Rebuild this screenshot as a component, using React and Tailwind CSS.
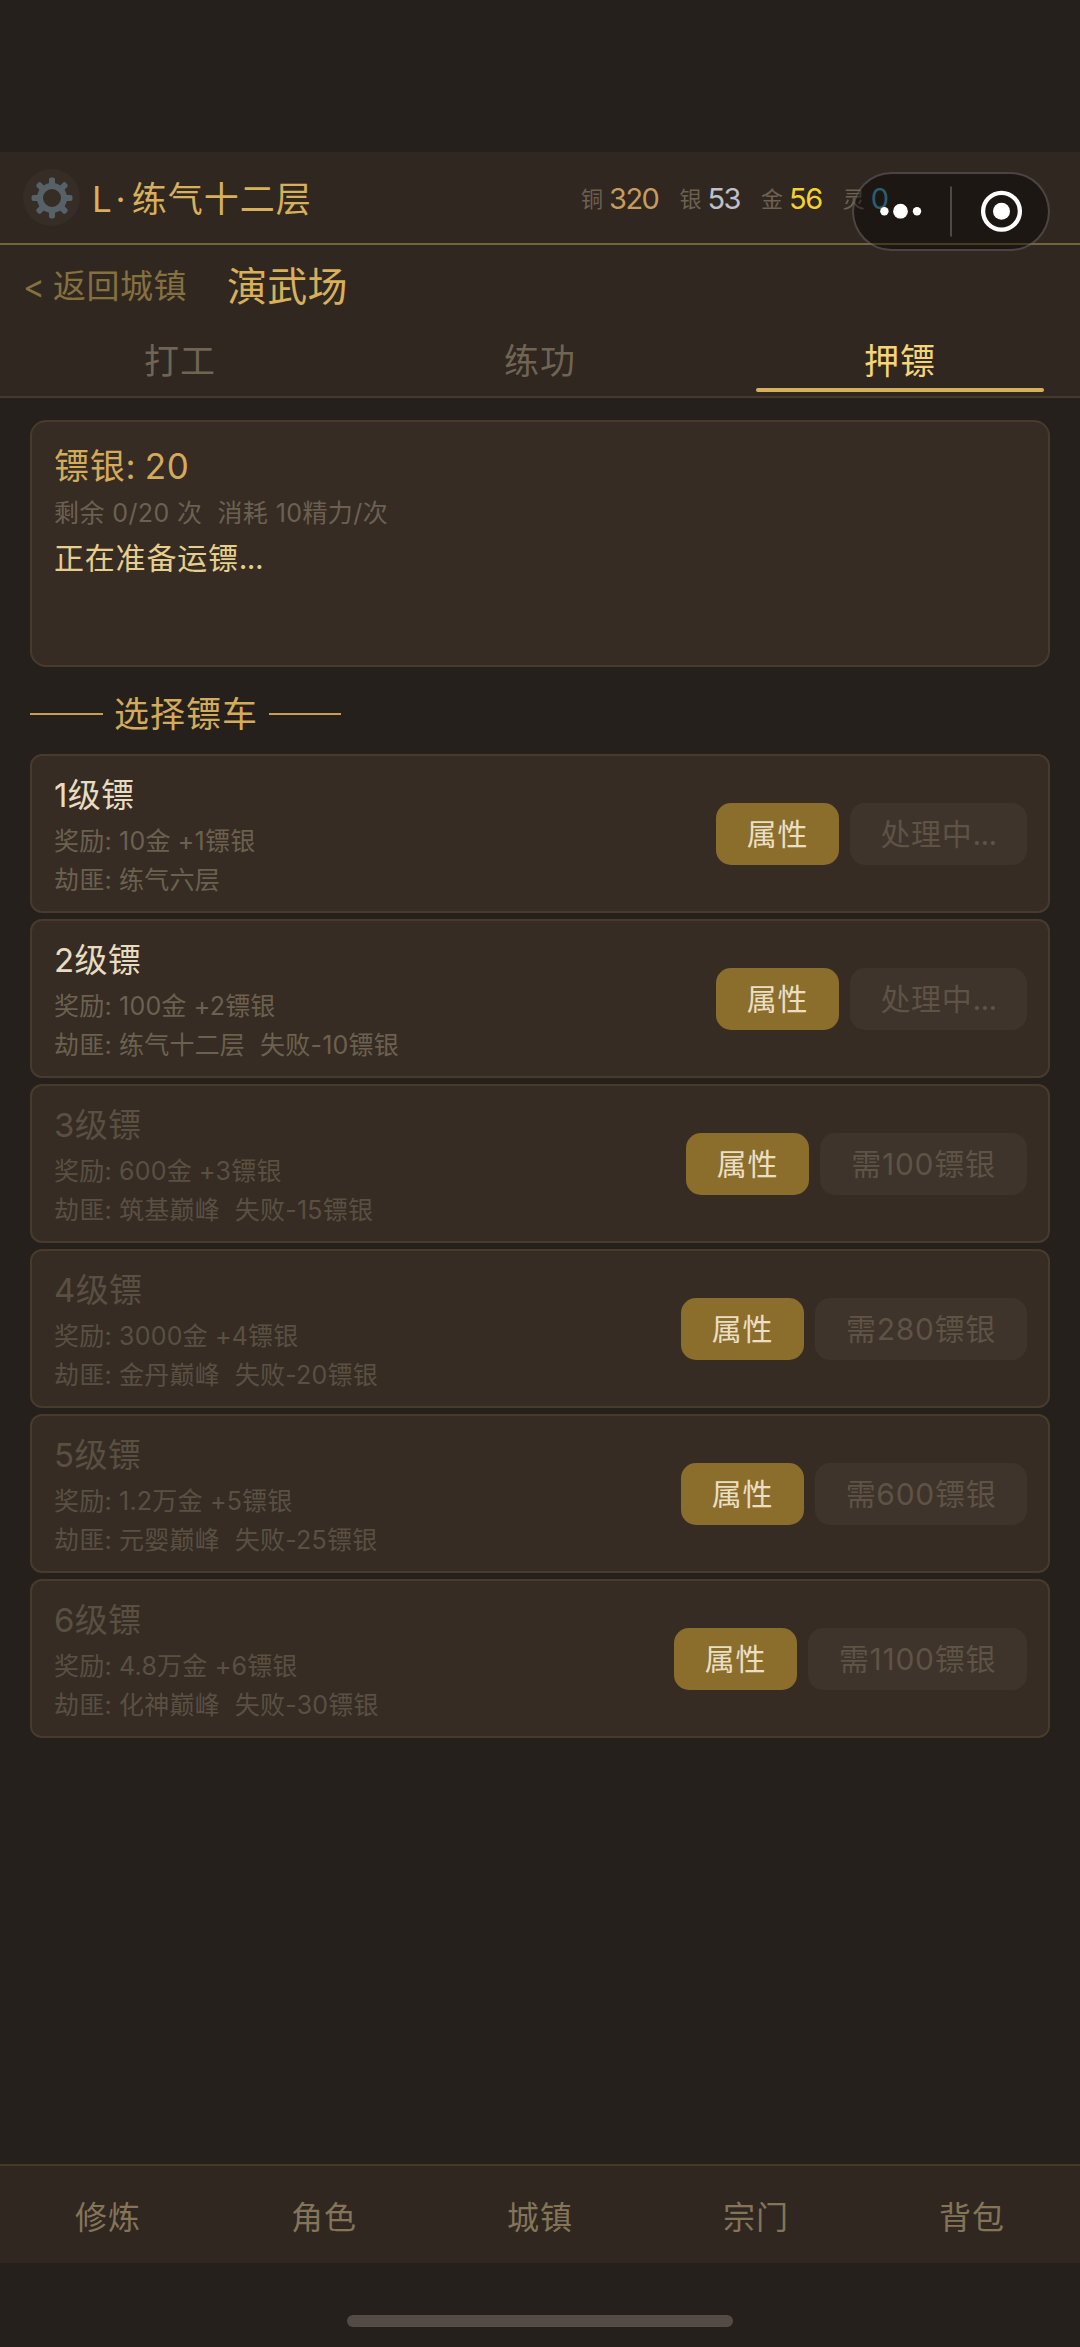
import React from 'react';

const currencies = [
  { label: '铜', value: '320', color: 'text-[#c69c5e]' },
  { label: '银', value: '53', color: 'text-[#c0c0cc]' },
  { label: '金', value: '56', color: 'text-[#f5d130]' },
  { label: '灵', value: '0', color: 'text-[#4a9cbd]' },
];

const tabs = [{ label: '打工' }, { label: '练功' }, { label: '押镖', active: true }];

const carts = [
  { level: '1', reward: '10金 +1镖银', bandit: '练气六层', action: '处理中', busy: true, width: 'w-[177px]' },
  { level: '2', reward: '100金 +2镖银', bandit: '练气十二层', loss: '失败-10镖银', action: '处理中', busy: true, width: 'w-[177px]' },
  { level: '3', reward: '600金 +3镖银', bandit: '筑基巅峰', loss: '失败-15镖银', action: '需100镖银', width: 'w-[207px]', locked: true },
  { level: '4', reward: '3000金 +4镖银', bandit: '金丹巅峰', loss: '失败-20镖银', action: '需280镖银', width: 'w-[212px]', locked: true },
  { level: '5', reward: '1.2万金 +5镖银', bandit: '元婴巅峰', loss: '失败-25镖银', action: '需600镖银', width: 'w-[212px]', locked: true },
  { level: '6', reward: '4.8万金 +6镖银', bandit: '化神巅峰', loss: '失败-30镖银', action: '需1100镖银', width: 'w-[219px]', locked: true },
];

const navItems = ['修炼', '角色', '城镇', '宗门', '背包'];

const gearTeeth = [0, 45, 90, 135, 180, 225, 270, 315];

const GearIcon = () => (
  <svg viewBox="0 0 42 42" className="h-[42px] w-[42px]" fill="#566168">
    <circle cx="21" cy="21" r="12" fill="none" stroke="#566168" strokeWidth="6" />
    {gearTeeth.map((angle) => (
      <path
        key={angle}
        d="M16.5 8 L18 6 V2.5 Q18 0.5 20 0.5 H22 Q24 0.5 24 2.5 V6 L25.5 8 Z"
        transform={`rotate(${angle} 21 21)`}
      />
    ))}
  </svg>
);

const Capsule = () => (
  <div className="absolute left-[852px] top-5 flex h-[79px] w-[198px] items-center rounded-full border-2 border-white/20 bg-black/40">
    <svg viewBox="0 0 194 75" className="h-[75px] w-[194px]" fill="#fff">
      <circle cx="30.4" cy="37.2" r="4.2" />
      <circle cx="46.5" cy="37.2" r="7.4" />
      <circle cx="63" cy="37.2" r="4.2" />
      <rect x="96" y="12.5" width="2" height="50" fillOpacity="0.22" />
      <circle cx="147.5" cy="37.2" r="18.4" fill="none" stroke="#fff" strokeWidth="4.3" />
      <circle cx="147.5" cy="37.2" r="8.5" />
    </svg>
  </div>
);

const Dots = () => <span className="tracking-[-0.6px]">...</span>;

const Header = () => (
  <header className="relative flex h-[93px] items-center border-b-2 border-[#75643a] bg-[#302721] pl-[23px]">
    <div className="flex h-[57px] w-[57px] items-center justify-center rounded-full bg-[#362d27]">
      <GearIcon />
    </div>
    <h1 className="ml-[12px] w-[220px] whitespace-nowrap pt-[3px] text-[35px] tracking-[1px] text-[#d8b05c]">
      <span className="tracking-[6px]">L·</span>练气十二层
    </h1>
    <div className="ml-[269px] flex items-center gap-[21px] pt-[2px]">
      {currencies.map((item) => (
        <div key={item.label} className="flex items-center gap-[6px] leading-10">
          <span className="text-[22px] text-[#6d6150]">{item.label}</span>
          <span className={`text-[29px] tracking-[-1.5px] ${item.color}`}>{item.value}</span>
        </div>
      ))}
    </div>
    <Capsule />
  </header>
);

const SubHeader = () => (
  <div className="h-[153px] border-b-2 border-[#453a29] bg-[#302721]">
    <div className="flex h-[78px] items-center pl-[23px] pt-[6px]">
      <span className="w-[204px] whitespace-nowrap text-[33px] tracking-[0.5px] text-[#85703f] [word-spacing:-2px]">
        &lt; 返回城镇
      </span>
      <h2 className="text-[40px] tracking-[0.3px] text-[#d8b05c]">演武场</h2>
    </div>
    <div className="grid grid-cols-3">
      {tabs.map((tab) => (
        <div key={tab.label} className="flex flex-col items-center">
          <span
            className={`h-[65px] text-[35px] leading-[77px] tracking-[1px] ${tab.active ? 'text-[#f5d578]' : 'text-[#6f6552]'}`}
          >
            {tab.label}
          </span>
          {tab.active && <span className="h-1 w-4/5 rounded-sm bg-[#d6b15d]" />}
        </div>
      ))}
    </div>
  </div>
);

const CartCard = ({ cart }) => (
  <li className="flex h-[159px] items-center justify-between rounded-xl border-2 border-[#493b2c] bg-[#362c24] pl-[22px] pr-[21px]">
    <div className={`whitespace-nowrap pt-[3px] text-[25px] leading-[38.6px] tracking-[0.2px] ${cart.locked ? 'text-[#5a5042]' : 'text-[#6c614f]'}`}>
      <h4 className={`mb-[2px] text-[33px] leading-[50px] tracking-[0.3px] ${cart.locked ? '' : 'text-[#e8dcc0]'}`}>
        {cart.level}级镖
      </h4>
      <p>奖励: {cart.reward}</p>
      <p>
        劫匪: {cart.bandit}
        {cart.loss && <span className="ml-[15px]">{cart.loss}</span>}
      </p>
    </div>
    <div className="flex gap-[11px] whitespace-nowrap text-[30px] leading-[58px] tracking-[0.7px]">
      <button className="h-[62px] w-[123px] rounded-[15px] bg-[#8b6d2c] pt-px text-[#eadfc3]">属性</button>
      <button className={`h-[62px] rounded-[15px] bg-[#3f342b] pt-px text-[#5e5344] ${cart.width}`}>
        {cart.action}
        {cart.busy && <Dots />}
      </button>
    </div>
  </li>
);

export default function App() {
  return (
    <div
      lang="zh-CN"
      className="flex h-[2347px] w-[1080px] flex-col bg-[#25201b] pt-[152px] font-[Inter,'Noto_Sans_CJK_SC',sans-serif]"
    >
      <Header />
      <SubHeader />

      <main className="flex-1 px-[30px] pt-[22px]">
        <section className="h-[247px] rounded-2xl border-2 border-[#493b2c] bg-[#362c24] px-[22px] pt-[20px]">
          <h3 className="text-[35px] leading-[48px] tracking-[0.7px] text-[#d3ab5b] [word-spacing:-2px]">镖银: 20</h3>
          <p className="text-[25px] leading-[47px] tracking-[0.4px] text-[#6c6150]">
            剩余 0/20 次<span className="ml-[15px]">消耗 10精力/次</span>
          </p>
          <p className="text-[30px] leading-[43px] tracking-[0.8px] text-[#e6cf8d]">
            正在准备运镖
            <Dots />
          </p>
        </section>

        <div className="flex h-[87px] items-center text-[#d3ab5b]">
          <span className="mt-[6px] h-[2px] w-[73px] bg-[#c4a04f]" />
          <h3 className="mx-[11px] pt-[7px] text-[35px] tracking-[1px]">选择镖车</h3>
          <span className="mt-[6px] h-[2px] w-[72px] bg-[#c4a04f]" />
        </div>

        <ul className="flex flex-col gap-[6px]">
          {carts.map((cart) => (
            <CartCard key={cart.level} cart={cart} />
          ))}
        </ul>
      </main>

      <nav className="grid h-[99px] grid-cols-5 border-t-2 border-[#453a26] bg-[#302721]">
        {navItems.map((item) => (
          <span key={item} className="h-[97px] text-center text-[32px] leading-[104px] tracking-[1px] text-[#847558]">
            {item}
          </span>
        ))}
      </nav>
      <footer className="flex h-[84px] justify-center pt-[52px]">
        <span className="h-[12px] w-[386px] rounded-full bg-[#534c46]" />
      </footer>
    </div>
  );
}
